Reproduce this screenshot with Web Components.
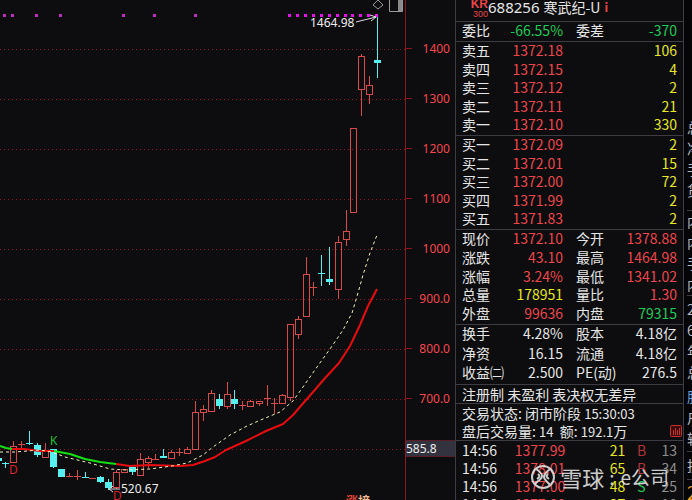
<!DOCTYPE html>
<html lang="zh-CN">
<head>
<meta charset="utf-8">
<title>688256 寒武纪-U</title>
<style>
  body {
    margin: 0;
    background: #0d0d0f;
    color: #e6e6e6;
    font-family: "Noto Sans CJK SC", "Noto Sans", sans-serif;
    font-size: 14px;
  }
</style>
</head>
<body>
<stock-screen>
  <k-chart slot="chart"></k-chart>
  <price-axis slot="axis" current="585.8"></price-axis>
  <quote-panel slot="quote">
    <quote-title slot="title" code="688256" name="寒武纪-U"></quote-title>
    <quote-block data="ratio" style="--block: 19px"></quote-block>
    <quote-block data="asks" style="--block: 93px"></quote-block>
    <quote-block data="bids" style="--block: 93px"></quote-block>
    <quote-block data="today" style="--block: 94px"></quote-block>
    <quote-block data="basics" style="--block: 59px"></quote-block>
    <status-block>
      <span>注册制 未盈利 表决权无差异</span>
    </status-block>
    <status-block>
      <span>交易状态: 闭市阶段 <small>15:30:03</small></span>
      <span>盘后交易量: <small>14</small>&nbsp; 额: <small>192.1</small>万</span>
      <chart-button slot="action"></chart-button>
    </status-block>
    <tick-list></tick-list>
    <water-mark slot="mark"></water-mark>
  </quote-panel>
  <side-strip slot="side"></side-strip>
</stock-screen>

<script>
const QUOTES = {
  ratio: [['委比', '-66.55%', 'green', '委差', '-370', 'green']],
  asks: [
    ['卖五', '1372.18', 'red', '', '106', 'yellow'],
    ['卖四', '1372.15', 'red', '', '4', 'yellow'],
    ['卖三', '1372.12', 'red', '', '2', 'yellow'],
    ['卖二', '1372.11', 'red', '', '21', 'yellow'],
    ['卖一', '1372.10', 'red', '', '330', 'yellow'],
  ],
  bids: [
    ['买一', '1372.09', 'red', '', '2', 'yellow'],
    ['买二', '1372.01', 'red', '', '15', 'yellow'],
    ['买三', '1372.00', 'red', '', '72', 'yellow'],
    ['买四', '1371.99', 'red', '', '2', 'yellow'],
    ['买五', '1371.83', 'red', '', '2', 'yellow'],
  ],
  today: [
    ['现价', '1372.10', 'red', '今开', '1378.88', 'red'],
    ['涨跌', '43.10', 'red', '最高', '1464.98', 'red'],
    ['涨幅', '3.24%', 'red', '最低', '1341.02', 'red'],
    ['总量', '178951', 'yellow', '量比', '1.30', 'red'],
    ['外盘', '99636', 'red', '内盘', '79315', 'green'],
  ],
  basics: [
    ['换手', '4.28%', '', '股本', '4.18亿', ''],
    ['净资', '16.15', '', '流通', '4.18亿', ''],
    ['收益㈡', '2.500', '', 'PE(动)', '276.5', ''],
  ],
};

const TICKS = [
  ['14:56', '1377.99', '21', 'B', '13'],
  ['14:56', '1378.01', '65', 'B', '34'],
  ['14:56', '1377.00', '48', 'S', '25'],
  ['14:56', '1377.00', '27', 'B', '10'],
];

// x, wick top, body top, body bottom, wick bottom, direction
const CANDLES = [
  [-2, 458, 458, 461, 462, 'd'], [5, 462, 463, 464, 468, 'd'], [13, 441, 446, 462, 462, 'u'],
  [21, 441, 444, 444, 448, 'u'], [29, 431, 443, 444, 445, 'd'], [37, 443, 445, 455, 457, 'd'],
  [45, 443, 451, 457, 457, 'u'], [53, 449, 449, 467, 468, 'd'], [61, 469, 469, 477, 477, 'd'],
  [69, 473, 476, 476, 477, 'u'], [77, 470, 476, 476, 480, 'u'], [85, 472, 477, 478, 478, 'd'],
  [92, 478, 478, 478, 479, 'u'], [100, 476, 477, 482, 483, 'd'], [108, 479, 482, 488, 490, 'd'],
  [116, 470, 472, 487, 489, 'u'], [124, 469, 469, 472, 472, 'u'], [132, 467, 467, 472, 475, 'd'],
  [140, 453, 459, 475, 475, 'u'], [148, 456, 458, 462, 468, 'u'], [155, 454, 459, 459, 460, 'u'],
  [163, 449, 456, 458, 458, 'd'], [171, 450, 452, 458, 458, 'u'], [179, 448, 452, 452, 456, 'u'],
  [187, 447, 449, 453, 453, 'u'], [195, 401, 412, 449, 449, 'u'], [203, 405, 409, 412, 421, 'u'],
  [211, 390, 393, 411, 411, 'u'], [219, 394, 399, 406, 409, 'd'], [227, 382, 394, 406, 409, 'u'],
  [234, 390, 399, 404, 409, 'd'], [242, 401, 405, 405, 410, 'u'], [250, 400, 401, 406, 406, 'u'],
  [259, 401, 401, 403, 406, 'u'], [267, 385, 398, 398, 406, 'u'], [274, 398, 403, 403, 414, 'u'],
  [282, 394, 395, 403, 403, 'u'], [290, 324, 324, 397, 401, 'u'], [298, 316, 319, 334, 339, 'u'],
  [306, 257, 274, 316, 316, 'u'], [313, 282, 287, 287, 296, 'u'], [321, 255, 273, 274, 286, 'd'],
  [329, 247, 279, 282, 285, 'd'], [338, 236, 242, 289, 299, 'u'], [346, 210, 231, 239, 246, 'u'],
  [353, 128, 128, 212, 212, 'u'], [361, 54, 56, 89, 116, 'u'], [369, 76, 85, 94, 104, 'u'],
  [377, 16, 60, 63, 78, 'd'],
];

const DOTS = [4, 12, 36, 60, 123, 154, 195, 289, 297, 305, 313, 321, 329, 337, 345, 352, 360, 368, 376];

class StockScreen extends HTMLElement {
  constructor() {
    super();
    this.attachShadow({ mode: 'open' }).innerHTML = `
      <style>
        :host { display: flex; height: 100vh; overflow: hidden; }
        main { display: flex; flex: 1; min-width: 0; }
        .chart { flex: 1; min-width: 0; }
      </style>
      <main>
        <div class="chart"><slot name="chart"></slot></div>
        <slot name="axis"></slot>
      </main>
      <slot name="quote"></slot>
      <slot name="side"></slot>
    `;
  }
}

class KChart extends HTMLElement {
  connectedCallback() {
    this.attachShadow({ mode: 'open' });
    this.render();
  }

  candle([x, high, top, bottom, low, dir]) {
    const c = x + 0.5;
    if (dir === 'd') {
      return `<path class="down" d="M${c} ${high}V${low}"/>
        <rect class="down-body" x="${x - 3}" y="${top}" width="7" height="${Math.max(bottom - top, 1)}"/>`;
    }
    if (top === bottom) {
      return `<path class="up" d="M${c} ${high}V${low}M${x - 3} ${top + 0.5}H${x + 4}"/>`;
    }
    return `<path class="up" d="M${c} ${high}V${top}M${c} ${bottom}V${low}"/>
      <rect class="up" x="${x - 2.5}" y="${top + 0.5}" width="6" height="${bottom - top}"/>`;
  }

  render() {
    const grid = [49, 99, 149, 199, 249, 299, 349, 399, 449]
      .map(y => `<path class="grid" d="M0 ${y}.5H405"/>`).join('');
    const dots = DOTS
      .map(x => `<rect x="${x - 1}" y="14" width="3" height="3" fill="${x > 280 ? '#e412e8' : '#bd2cbd'}"/>`).join('');
    this.shadowRoot.innerHTML = `
      <style>
        :host { display: block; height: 100%; font-family: "Noto Sans", "Noto Sans CJK SC", sans-serif; }
        svg { display: block; width: 100%; height: 100%; }
        text { font-size: 12px; fill: #ececec; }
        path { fill: none; }
        .grid { stroke: #8a1620; stroke-dasharray: 1 3; }
        .up { fill: none; stroke: #d64a4c; }
        .down { stroke: #54f0f0; }
        .down-body { fill: #54f0f0; }
        .line { stroke-width: 2; stroke-linejoin: round; }
        .red { stroke: #e60c10; }
        .green { stroke: #14e014; }
        .dash { stroke: #f0f0bc; stroke-dasharray: 3 3; }
        .arrow { stroke: #dcdcdc; }
        .tool { stroke: #9a9a9a; }
      </style>
      <svg viewBox="0 0 405 500" preserveAspectRatio="xMaxYMin slice" role="img" aria-label="K线图">
        ${grid}
        ${CANDLES.map(c => this.candle(c)).join('')}
        <path class="line green" d="M0 446L6 448L12 449"/>
        <path class="line red" d="M12 449L24 449L40 451L54 451"/>
        <path class="line green" d="M54 451L70 454L85 459L100 462L116 464"/>
        <path class="line red" d="M116 464L130 466L150 465L180 466L193 465L205 461L215 457L226 450L246 441L266 431L283 424L293 415L313 392L326 377L339 363L350 346L360 325L368 306L377 289"/>
        <path class="dash" d="M0 452L15 452L40 450L52 452L65 457L90 463L110 469L125 470L150 469L172 466L187 463L203 455L213 447L230 435L247 426L263 419L280 412L293 401L303 387L317 367L330 349L343 330L352 313L358 293L363 275L370 253L377 235"/>
        ${dots}
        <text x="310" y="27">1464.98</text>
        <path class="arrow" d="M356 22L376 17M370 15L376 17L371 21"/>
        <text x="121" y="493">520.67</text>
        <path class="arrow" d="M120 489H109M113 486L109 489L113 492"/>
        <text x="50" y="445" style="fill:#20c030">K</text>
        <text x="9" y="474" style="fill:#d42226">D</text>
        <text x="113" y="500" style="fill:#d42226">D</text>
        <text x="346" y="506" style="font-weight:bold;fill:#e8453c">涨<tspan fill="#f0b890">榜</tspan></text>
        <path class="tool" d="M378 0L383 5L378 9L373 5Z"/>
        <path class="tool" d="M389.500 -1V11.500H402.500V-1"/>
        <rect x="398" y="0" width="4" height="11" fill="#8a8a8a"/>
      </svg>
    `;
  }
}

class PriceAxis extends HTMLElement {
  connectedCallback() {
    const levels = ['1400', '1300', '1200', '1100', '1000', '900.0', '800.0', '700.0'];
    this.attachShadow({ mode: 'open' }).innerHTML = `
      <style>
        :host {
          display: block; width: 49px; border-left: 1px solid #8c1620; color: #f4464e;
          font-family: "Noto Sans", sans-serif; font-size: 12px;
        }
        ol { list-style: none; margin: 0; padding: 23px 5px 0 0; }
        li { display: flex; align-items: center; justify-content: space-between; height: 50px; }
        li::before { content: ""; width: 6px; height: 1px; background: #8c1620; }
        output {
          display: block; margin-top: 17px; height: 15px; line-height: 15px;
          border: solid #5a1c26; border-width: 1px 0; background: #33333f; color: #ececec;
        }
      </style>
      <ol>${levels.map(l => `<li><span>${l}</span></li>`).join('')}</ol>
      <output>${this.getAttribute('current')}</output>
    `;
  }
}

class QuotePanel extends HTMLElement {
  constructor() {
    super();
    this.attachShadow({ mode: 'open' }).innerHTML = `
      <style>
        :host { display: block; position: relative; flex: 0 0 227px; border: solid #3c3c42; border-width: 0 1px; }
      </style>
      <slot name="title"></slot>
      <slot></slot>
      <slot name="mark"></slot>
    `;
  }
}

class QuoteTitle extends HTMLElement {
  connectedCallback() {
    this.attachShadow({ mode: 'open' }).innerHTML = `
      <style>
        :host { display: block; height: 21px; overflow: hidden; }
        header { display: flex; padding-left: 14px; line-height: 14px; }
        .tag {
          display: flex; flex-direction: column; align-items: flex-end; width: 18px; color: #e8444a;
          font-family: "Liberation Sans", sans-serif;
        }
        .tag b { font-size: 12px; line-height: 9px; }
        .tag span { font-size: 9px; line-height: 11px; }
        h1 { display: flex; gap: 4px; margin: 0; font-size: 14px; font-weight: normal; }
        .code { font-family: "Noto Sans", sans-serif; font-size: 15px; }
        .info { color: #e8444a; font-size: 12px; margin-left: 4px; }
      </style>
      <header>
        <div class="tag"><b>KR</b><span>300</span></div>
        <h1><span class="code">${this.getAttribute('code')}</span><span>${this.getAttribute('name')}</span></h1>
        <b class="info">i</b>
      </header>
    `;
  }
}

class QuoteBlock extends HTMLElement {
  connectedCallback() {
    const rows = QUOTES[this.getAttribute('data')].map(([l1, v1, c1, l2, v2, c2]) => `
      <tr>
        <th scope="row">${l1}</th><td class="${c1}">${v1}</td>
        <th class="second">${l2}</th><td class="${c2}">${v2}</td>
      </tr>`).join('');
    this.attachShadow({ mode: 'open' }).innerHTML = `
      <style>
        :host { display: block; border-top: 1px solid #3c3c42; padding: 0 6px; }
        table { width: 100%; height: var(--block); table-layout: fixed; border-collapse: collapse; }
        th, td { padding: 0; line-height: 17px; white-space: nowrap; vertical-align: top; }
        th { width: 19%; font-weight: normal; text-align: left; }
        td { width: 28%; text-align: right; }
        th.second { width: 25%; padding-left: 13px; box-sizing: border-box; }
        .red { color: #ec464c; }
        .green { color: #1ecc58; }
        .yellow { color: #e6e622; }
      </style>
      <table>${rows}</table>
    `;
  }
}

class StatusBlock extends HTMLElement {
  constructor() {
    super();
    this.attachShadow({ mode: 'open' }).innerHTML = `
      <style>
        :host { display: flex; align-items: flex-end; border-top: 1px solid #3c3c42; padding: 0 1px 0 6px; }
        div { display: flex; flex: 1; flex-direction: column; line-height: 18px; white-space: nowrap; }
        ::slotted(span) { display: block; }
      </style>
      <div><slot></slot></div>
      <slot name="action"></slot>
    `;
    // keep the smaller digits from growing the line
    this.querySelectorAll('small').forEach(el => {
      el.style.fontSize = '13px';
      el.style.lineHeight = '1';
    });
  }
}

class ChartButton extends HTMLElement {
  connectedCallback() {
    this.attachShadow({ mode: 'open' }).innerHTML = `
      <style>
        :host { display: block; padding-bottom: 3px; }
        button { display: block; padding: 0; border: 0; background: none; }
        svg { display: block; }
      </style>
      <button type="button" aria-label="盘后走势">
        <svg width="12" height="12" viewBox="0 0 12 12" fill="none" stroke="#c8302e">
          <rect x=".5" y=".5" width="11" height="11" rx="1" fill="#3a0c0e"/>
          <path d="M3.500 10V5M5.500 10V3M7.500 10V5M9.500 10V3"/>
        </svg>
      </button>
    `;
  }
}

class TickList extends HTMLElement {
  connectedCallback() {
    const rows = TICKS.map(([time, price, vol, side, count]) => `
      <tr>
        <td class="time">${time}</td><td class="price">${price}</td><td class="vol">${vol}</td>
        <td class="side ${side}">${side}</td><td class="count">${count}</td>
      </tr>`).join('');
    this.attachShadow({ mode: 'open' }).innerHTML = `
      <style>
        :host { display: block; border-top: 1px solid #3c3c42; padding: 0 6px; }
        table { width: 100%; table-layout: fixed; border-collapse: collapse; }
        td { padding: 0; line-height: 18px; text-align: right; vertical-align: top; }
        .time { width: 20%; text-align: left; }
        .price { width: 28%; color: #ec464c; }
        .vol { width: 28%; color: #e6e622; }
        .side { width: 15%; text-align: center; }
        .B { color: #b0343a; }
        .S { color: #1ecc58; }
        .count { color: #8c8c8c; }
      </style>
      <table>${rows}</table>
    `;
  }
}

class WaterMark extends HTMLElement {
  connectedCallback() {
    this.attachShadow({ mode: 'open' }).innerHTML = `
      <style>
        /* floats over the tick list */
        :host {
          position: absolute; right: 14px; top: 465px; display: flex; align-items: center;
          color: #e6e6e6; opacity: .88; pointer-events: none; white-space: nowrap; line-height: 24px;
        }
        svg { margin-right: 5px; }
        .brand { font-size: 22px; }
        .name { font-size: 19px; }
        .sep { font-size: 19px; margin: 0 6px 0 5px; }
      </style>
      <svg width="24" height="24" viewBox="0 0 24 24" fill="none" stroke="currentColor" stroke-width="2">
        <circle cx="12" cy="12" r="11"/>
        <path d="M5 4C8 6 11 8 11 11C11 15 7 15 4 19M7 9C9 11 9 12 6 14"/>
        <path d="M19 4C16 7 13 8 13 12C13 15 17 17 19 20M17 9C15 11 15 12 18 14"/>
      </svg>
      <span class="brand">雪球</span><span class="sep">:</span><span class="name">e公司</span>
    `;
  }
}

class SideStrip extends HTMLElement {
  connectedCallback() {
    const groups = ['总净手货', '内内手内', '26年总', '股户转', '技'];
    this.attachShadow({ mode: 'open' }).innerHTML = `
      <style>
        :host { display: block; flex: 0 0 8px; box-sizing: border-box; padding: 117px 0 0 3px; overflow: hidden; background: #050507; color: #b8bcc4; }
        section { display: flex; flex-direction: column; line-height: 21px; width: 14px; border-bottom: 1px solid #3c3c42; }
        section:nth-of-type(1) { padding-bottom: 9px; }
        section:nth-of-type(3) { padding: 3px 0; border: 0; }
        section:nth-of-type(4) { padding-bottom: 2px; }
        section:nth-of-type(5) { padding: 3px 0; }
        .blue { color: #6fa4d8; }
        .orange { color: #f0a020; font-size: 18px; line-height: 24px; }
      </style>
      ${groups.map(g => `<section>${[...g].map(ch => `<span class="${ch === '股' ? 'blue' : ''}">${ch}</span>`).join('')}</section>`).join('')}
      <span class="orange">2</span>
    `;
  }
}

customElements.define('stock-screen', StockScreen);
customElements.define('k-chart', KChart);
customElements.define('price-axis', PriceAxis);
customElements.define('quote-panel', QuotePanel);
customElements.define('quote-title', QuoteTitle);
customElements.define('quote-block', QuoteBlock);
customElements.define('status-block', StatusBlock);
customElements.define('chart-button', ChartButton);
customElements.define('tick-list', TickList);
customElements.define('water-mark', WaterMark);
customElements.define('side-strip', SideStrip);
</script>
</body>
</html>
